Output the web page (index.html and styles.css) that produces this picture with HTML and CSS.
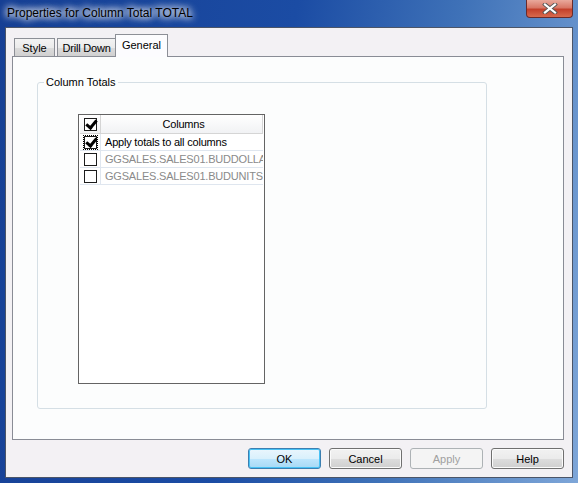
FILE: index.html
```html
<!DOCTYPE html>
<html lang="en">

<head>
	<meta charset="UTF-8">
	<title>Properties for Column Total TOTAL</title>
	<link rel="stylesheet" href="styles.css">
</head>

<body>
	<div class="window">
		<div class="titlebar">
			<span class="title">Properties for Column Total TOTAL</span>
			<button class="close">
				<svg width="16" height="11" viewBox="0 0 16 11">
					<path d="M3 1.5 L13 9.5 M13 1.5 L3 9.5" stroke="#555" stroke-width="4" stroke-linecap="square"/>
					<path d="M3 1.5 L13 9.5 M13 1.5 L3 9.5" stroke="#fff" stroke-width="2.2" stroke-linecap="square"/>
				</svg>
			</button>
		</div>
		<div class="client">
			<div class="tabs">
				<div class="tab tab-style">Style</div>
				<div class="tab tab-drill">Drill Down</div>
				<div class="tab active">General</div>
			</div>
			<div class="panel">
				<fieldset class="group">
					<legend>Column Totals</legend>
					<div class="grid">
						<div class="row head">
							<div class="cell check"><span class="box checked"></span></div>
							<div class="cell text">Columns</div>
						</div>
						<div class="row">
							<div class="cell check"><span class="focus"><span class="box checked"></span></span></div>
							<div class="cell text">Apply totals to all columns</div>
						</div>
						<div class="row dim">
							<div class="cell check"><span class="box"></span></div>
							<div class="cell text">GGSALES.SALES01.BUDDOLLARS</div>
						</div>
						<div class="row dim">
							<div class="cell check"><span class="box"></span></div>
							<div class="cell text">GGSALES.SALES01.BUDUNITS</div>
						</div>
					</div>
				</fieldset>
			</div>
			<div class="buttons">
				<button class="btn default">OK</button>
				<button class="btn">Cancel</button>
				<button class="btn disabled">Apply</button>
				<button class="btn">Help</button>
			</div>
		</div>
	</div>
</body>

</html>
```

FILE: styles.css
```css
* {
	margin: 0;
	padding: 0;
	box-sizing: border-box;
}

body {
	width: 578px;
	height: 483px;
	overflow: hidden;
	font-family: "Liberation Sans", Arial, sans-serif;
	font-size: 11px;
	color: #000;
	background: #1f54a8;
}

.window {
	width: 578px;
	height: 483px;
	display: flex;
	flex-direction: column;
	background: linear-gradient(100deg, #163f94 0%, #1b4ca4 45%, #3f72b8 70%, #7ea6d8 100%);
}

/* title bar */
.titlebar {
	height: 27px;
	position: relative;
	flex: none;
}

.title {
	position: absolute;
	left: 7px;
	top: 6px;
	font-size: 12px;
	color: #000;
	padding: 0 6px 0 0;
	text-shadow: 0 0 6px #fff, 0 0 8px #fff, 0 0 10px #fff;
}

.close {
	position: absolute;
	left: 526px;
	top: 0;
	width: 47px;
	height: 18px;
	border: 1px solid #6a2b2b;
	border-top: none;
	border-radius: 0 0 4px 4px;
	background: linear-gradient(#e9a99c 0%, #d87766 45%, #c3402b 55%, #d86a4e 100%);
	display: flex;
	align-items: center;
	justify-content: center;
}

/* client area */
.client {
	flex: 1;
	margin: 0 5px 5px 5px;
	border: 1px solid #4b5568;
	background: #f3f1f4;
	padding: 6px 8px 0 6px;
}

.tabs {
	display: flex;
	align-items: flex-end;
	height: 22px;
	padding-left: 2px;
	position: relative;
	z-index: 1;
}

.tab {
	height: 18px;
	border: 1px solid #8c8f96;
	border-bottom: none;
	background: linear-gradient(#f3f3f3 0%, #ebebeb 50%, #dcdcdc 51%, #d0d0d0 100%);
	padding: 2px 0 0 0;
	line-height: 14px;
	white-space: nowrap;
	text-align: center;
}

.tab-style {
	width: 41px;
	margin-right: 2px;
}

.tab-drill {
	width: 58px;
	border-right: none;
	letter-spacing: -0.2px;
}

.tab.active {
	height: 23px;
	width: 53px;
	background: #fcfcfe;
	padding: 3px 0 0 0;
	margin-bottom: -1px;
}

.panel {
	height: 384px;
	border: 1px solid #898c95;
	background: #fcfdfd;
	padding: 19px 0 0 24px;
}

.group {
	width: 450px;
	height: 333px;
	border: 1px solid #d5dfe5;
	border-radius: 3px;
	padding: 0;
}

.group legend {
	margin-left: 6px;
	padding: 0 2px;
	line-height: 13px;
}

/* list grid */
.grid {
	margin: 25px 0 0 40px;
	width: 187px;
	height: 270px;
	border: 1px solid #646464;
	background: #fff;
	padding-left: 1px;
	letter-spacing: -0.2px;
}

.row {
	display: flex;
	height: 17px;
	width: 183px;
	border-bottom: 1px solid #dfe6ef;
}

.row.head {
	height: 19px;
	border-bottom: 1px solid #d5d5d5;
	background: linear-gradient(#ffffff, #f1f2f4);
}

.cell {
	display: flex;
	align-items: center;
}

.check {
	width: 21px;
	justify-content: center;
	border-right: 1px solid #dfe6ef;
}

.head .check,
.head .text {
	border-right: 1px solid #d5d5d5;
}

.text {
	flex: 1;
	padding-left: 4px;
	white-space: nowrap;
	overflow: hidden;
}

.head .text {
	justify-content: center;
}

.dim .text {
	color: #8a8a8a;
}

.box {
	display: block;
	width: 13px;
	height: 13px;
	border: 1px solid #1c1c1c;
	background: #fff;
	position: relative;
}

.box.checked::after {
	content: "";
	position: absolute;
	left: 3px;
	top: -1px;
	width: 4px;
	height: 8px;
	border: solid #000;
	border-width: 0 3px 3px 0;
	transform: rotate(40deg);
}

.focus {
	display: block;
	padding: 1px;
	outline: 1px dotted #000;
	outline-offset: -1px;
}

/* buttons */
.buttons {
	display: flex;
	justify-content: flex-end;
	gap: 8px;
	padding-top: 8px;
	padding-right: 0;
}

.btn {
	width: 73px;
	height: 21px;
	border: 1px solid #707070;
	border-radius: 3px;
	font-family: "Liberation Sans", Arial, sans-serif;
	font-size: 11px;
	color: #000;
	background: linear-gradient(#f2f2f2 0%, #ebebeb 50%, #dddddd 51%, #cfcfcf 100%);
	box-shadow: inset 0 0 0 1px #fbfbfb;
}

.btn.default {
	border-color: #3c7fb1;
	background: linear-gradient(#eaf6fd 0%, #d9f0fc 50%, #bee6fd 51%, #a7d9f5 100%);
	box-shadow: inset 0 0 0 1px #48c2f5;
}

.btn.disabled {
	color: #a0a0a0;
	border-color: #adb2b5;
	background: #f4f4f4;
	box-shadow: none;
}
```
